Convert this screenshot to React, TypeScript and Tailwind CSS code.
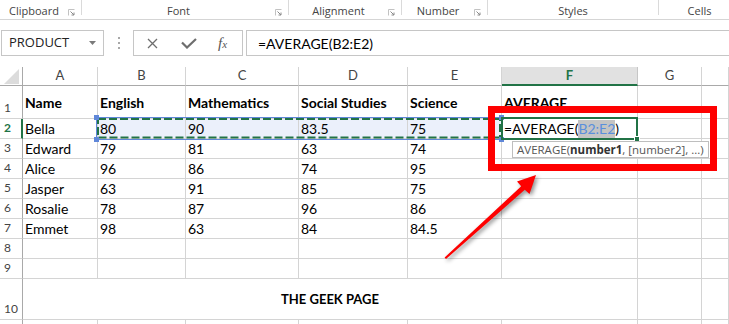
import React from "react";

const gridCols = "grid-cols-[23px_75px_88px_113px_109px_94px_136px_64px_1fr]";
const letters = ["A", "B", "C", "D", "E", "F", "G", ""];

type Row = { n: number; h: string; cells: string[]; bold?: boolean };

const rows: Row[] = [
  { n: 1, h: "h-[33px]", bold: true, cells: ["Name", "English", "Mathematics", "Social Studies", "Science", "AVERAGE", "", ""] },
  { n: 2, h: "h-[20px]", cells: ["Bella", "80", "90", "83.5", "75", "", "", ""] },
  { n: 3, h: "h-[20px]", cells: ["Edward", "79", "81", "63", "74", "", "", ""] },
  { n: 4, h: "h-[20px]", cells: ["Alice", "96", "86", "74", "95", "", "", ""] },
  { n: 5, h: "h-[20px]", cells: ["Jasper", "63", "91", "85", "75", "", "", ""] },
  { n: 6, h: "h-[20px]", cells: ["Rosalie", "78", "87", "96", "86", "", "", ""] },
  { n: 7, h: "h-[20px]", cells: ["Emmet", "98", "63", "84", "84.5", "", "", ""] },
  { n: 8, h: "h-[20px]", cells: ["", "", "", "", "", "", "", ""] },
  { n: 9, h: "h-[20px]", cells: ["", "", "", "", "", "", "", ""] },
];

const groups = [
  { label: "Clipboard", w: "w-[82px]", launcher: true },
  { label: "Font", w: "w-[207px]", launcher: true },
  { label: "Alignment", w: "w-[113px]", launcher: true },
  { label: "Number", w: "w-[86px]", launcher: true },
  { label: "Styles", w: "w-[171px]", launcher: false },
  { label: "Cells", w: "w-[82px]", launcher: false },
];

function Launcher() {
  return (
    <svg width="7" height="7" viewBox="0 0 7 7" className="mt-[9px] mr-[6px] shrink-0">
      <path d="M0.5 6.5V0.5H6.5" stroke="#c2c2c2" fill="none" />
      <path d="M2.5 2.5L6 6M6 3.5V6H3.5" stroke="#8a8a8a" fill="none" />
    </svg>
  );
}

function RowHeader({ n, h, active }: { n?: number; h: string; active?: boolean }) {
  return (
    <div
      className={`${h} flex items-end pl-[4px] pb-[2px] text-[12px] leading-[16px] border-b border-b-[#d4d4d4] ${
        active ? "border-r-2 border-r-[#217346] text-[#217346] font-bold" : "border-r border-r-[#a9a9a9] text-[#444]"
      }`}
    >
      {n}
    </div>
  );
}

function Cell({ h, children, className = "" }: { h: string; children?: React.ReactNode; className?: string }) {
  return (
    <div
      className={`${h} flex items-center pl-[2px] pt-[1px] text-[14px] leading-[18px] whitespace-nowrap border-r border-b border-[#d4d4d4] ${className}`}
    >
      {children}
    </div>
  );
}

export default function App() {
  return (
    <div className="relative w-[729px] h-[324px] overflow-hidden bg-white font-['Lato',sans-serif] text-black">
      {/* Ribbon group labels */}
      <div className="flex h-[20px] border-b border-[#d5d5d5] font-['Open_Sans',sans-serif] text-[11px] text-[#444]">
        {groups.map((g) => (
          <div key={g.label} className={`${g.w} shrink-0 flex items-start h-[15px] border-r border-[#dadada]`}>
            <span className="flex-1 text-center leading-[13px] mt-[4px]">{g.label}</span>
            {g.launcher && <Launcher />}
          </div>
        ))}
      </div>

      {/* Formula bar */}
      <div className="flex items-center mt-[10px] h-[26px] font-['Open_Sans',sans-serif]">
        <div className="ml-[1px] w-[103px] h-full flex items-center justify-between border border-[#c6c6c6] pl-[7px] pr-[7px]">
          <span className="text-[13px] text-[#222]">PRODUCT</span>
          <svg width="7" height="4" viewBox="0 0 7 4">
            <path d="M0 0H7L3.5 4Z" fill="#7a7a7a" />
          </svg>
        </div>
        <div className="w-[29px] h-full flex flex-col items-center justify-center gap-[3px]">
          <span className="w-[2px] h-[2px] bg-[#a8a8a8]" />
          <span className="w-[2px] h-[2px] bg-[#a8a8a8]" />
          <span className="w-[2px] h-[2px] bg-[#a8a8a8]" />
        </div>
        <div className="w-[110px] h-full flex items-center border border-[#c6c6c6] pl-[13px]">
          <svg width="11" height="11" viewBox="0 0 11 11">
            <path d="M1 1L10 10M10 1L1 10" stroke="#6e6e6e" strokeWidth="1.3" />
          </svg>
          <svg width="16" height="11" viewBox="0 0 16 11" className="ml-[23px]">
            <path d="M1 4.5L6 9.5L15 1" stroke="#6e6e6e" strokeWidth="2.2" fill="none" />
          </svg>
          <span className="ml-[21px] font-['Liberation_Serif',serif] italic text-[15px] text-[#555] leading-none">
            f<span className="text-[11px]">x</span>
          </span>
        </div>
        <div className="ml-[3px] flex-1 h-full flex items-center border border-r-0 border-[#c6c6c6] pl-[11px] font-['Lato',sans-serif] text-[14px]">
          =AVERAGE(B2:E2)
        </div>
      </div>

      {/* Sheet grid */}
      <div className={`grid ${gridCols} mt-[11px]`}>
        {/* column headers */}
        <div className="h-[19px] relative border-r border-b border-[#a9a9a9]">
          <svg width="15" height="15" viewBox="0 0 15 15" className="absolute right-[3px] bottom-[1px]">
            <path d="M0 15H15V0Z" fill="#dcdcdc" />
          </svg>
        </div>
        {letters.map((l, i) =>
          l === "F" ? (
            <div
              key={i}
              className="h-[19px] flex items-center justify-center text-[13px] font-bold text-[#217346] bg-[#e1e1e1] border-r border-r-[#c6c6c6] border-b-2 border-b-[#217346]"
            >
              F
            </div>
          ) : (
            <div
              key={i}
              className="h-[19px] flex items-center justify-center text-[13px] text-[#444] border-r border-b border-r-[#d4d4d4] border-b-[#a9a9a9]"
            >
              {l}
            </div>
          )
        )}

        {rows.map((r) => (
          <React.Fragment key={r.n}>
            <RowHeader n={r.n} h={r.h} active={r.n === 2} />
            {r.cells.map((c, i) => {
              if (r.n === 2 && i === 5) {
                return (
                  <Cell key={i} h={r.h}>
                    =AVERAGE(<span className="bg-[#c4c4c4] text-[#5a8fdc]">B2:E2</span>)
                  </Cell>
                );
              }
              return (
                <Cell
                  key={i}
                  h={r.h}
                  className={`${r.bold ? "font-bold" : ""} ${r.n === 2 && i >= 1 && i <= 4 ? "bg-[#ebf0fb]" : ""}`}
                >
                  {c}
                </Cell>
              );
            })}
          </React.Fragment>
        ))}

        {/* row 10, merged A:F */}
        <RowHeader n={10} h="h-[41px]" />
        <div className="col-span-6 h-[41px] flex items-center justify-center pt-[2px] text-[13px] font-bold border-r border-b border-[#d4d4d4]">
          THE GEEK PAGE
        </div>
        <Cell h="h-[41px]" />
        <Cell h="h-[41px]" />

        {/* row 11, only its top few pixels show */}
        <RowHeader h="h-[20px]" />
        {letters.map((l) => (
          <Cell key={l} h="h-[20px]" />
        ))}
      </div>

      {/* range highlight B2:E2 */}
      <svg width="413" height="32" viewBox="0 0 413 32" className="absolute left-[93px] top-[113px]">
        <rect x="3.5" y="4.5" width="405" height="22" fill="none" stroke="#5f87d9" strokeWidth="1" />
        <rect x="5" y="6" width="402" height="18.5" fill="none" stroke="#217346" strokeWidth="2" strokeDasharray="8 3" />
        <rect x="1" y="2" width="5" height="5" fill="#5f87d9" />
        <rect x="1" y="24" width="5" height="5" fill="#5f87d9" />
        <rect x="406" y="2" width="5" height="5" fill="#5f87d9" />
        <rect x="406" y="24" width="5" height="5" fill="#5f87d9" />
      </svg>

      {/* active cell F2 */}
      <div className="absolute left-[501px] top-[117px] w-[137px] h-[23px] border-2 border-[#217346]" />
      <div className="absolute left-[634px] top-[136px] w-[6px] h-[6px] bg-[#217346] border border-white" />

      {/* function tooltip */}
      <div className="absolute left-[512px] top-[141px] w-[197px] h-[17px] flex items-center pl-[4px] bg-white border border-[#bebebe] font-['Open_Sans',sans-serif] text-[11.5px] text-[#555] whitespace-nowrap">
        AVERAGE(<span className="font-bold text-[#333]">number1</span>, [number2], ...)
      </div>

      {/* red callout box */}
      <div className="absolute left-[488px] top-[106px] w-[229px] h-[65px] border-[7px] border-[#fe0000]" />

      {/* red arrow */}
      <svg
        width="115"
        height="100"
        viewBox="435 165 115 100"
        className="absolute left-[435px] top-[165px] drop-shadow-[2px_2px_2px_rgba(0,0,0,0.45)]"
      >
        <polygon
          points="536,175 529.5,194 524.8,189.8 446,259 444.6,257.6 521.2,186.2 517,181.5"
          fill="#fe0000"
        />
      </svg>
    </div>
  );
}
